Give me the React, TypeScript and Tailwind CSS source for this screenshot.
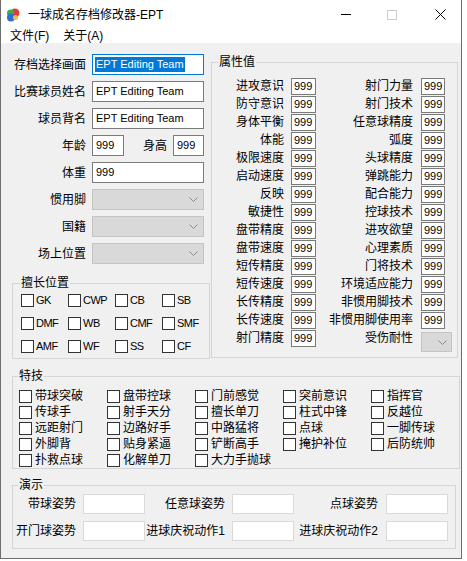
import React from "react";

const leftAttrs = ["进攻意识", "防守意识", "身体平衡", "体能", "极限速度", "启动速度", "反映", "敏捷性", "盘带精度", "盘带速度", "短传精度", "短传速度", "长传精度", "长传速度", "射门精度"];
const rightAttrs = ["射门力量", "射门技术", "任意球精度", "弧度", "头球精度", "弹跳能力", "配合能力", "控球技术", "进攻欲望", "心理素质", "门将技术", "环境适应能力", "非惯用脚技术", "非惯用脚使用率"];

const positions = ["GK", "CWP", "CB", "SB", "DMF", "WB", "CMF", "SMF", "AMF", "WF", "SS", "CF"];

const skills = [
  ["带球突破", "盘带控球", "门前感觉", "突前意识", "指挥官"],
  ["传球手", "射手天分", "擅长单刀", "柱式中锋", "反越位"],
  ["远距射门", "边路好手", "中路猛将", "点球", "一脚传球"],
  ["外脚背", "贴身紧逼", "铲断高手", "掩护补位", "后防统帅"],
  ["扑救点球", "化解单刀", "大力手抛球"],
];

function Chevron() {
  return (
    <svg width="9" height="5" viewBox="0 0 9 5" fill="none">
      <path d="M0.5 0.5 L4.5 4.5 L8.5 0.5" stroke="#8a8a8a" strokeWidth="1" />
    </svg>
  );
}

function Combo({ className = "" }: { className?: string }) {
  return (
    <div className={`h-[21px] bg-[#d9d9d9] border border-[#c4c4c4] flex items-center justify-end pr-[5px] ${className}`}>
      <Chevron />
    </div>
  );
}

function Box() {
  return <span className="w-[13px] h-[13px] border border-[#333333] bg-white shrink-0" />;
}

function TextBox({ value, className = "", selected = false }: { value: string; className?: string; selected?: boolean }) {
  return (
    <div
      className={`h-[21px] bg-white border flex items-center pl-[2px] text-[11px] ${selected ? "border-[#0078d7]" : "border-[#7a7a7a]"} ${className}`}
    >
      <span className={selected ? "bg-[#0078d7] text-white px-[1px] leading-[15px]" : "px-[1px]"}>{value}</span>
    </div>
  );
}

function LeftRow({ label, children }: { label: string; children: React.ReactNode }) {
  return (
    <div className="flex items-center h-[21px]">
      <span className="w-[85px] text-right text-[12px]">{label}</span>
      <div className="ml-[6px] flex items-center">{children}</div>
    </div>
  );
}

function AppIcon() {
  return (
    <svg width="14" height="14" viewBox="0 0 14 14">
      <circle cx="9" cy="5" r="4.5" fill="#e23b3b" />
      <circle cx="4.5" cy="5" r="3.5" fill="#3fae49" />
      <circle cx="5" cy="9.5" r="4" fill="#2f6fd6" />
      <circle cx="9.5" cy="9.5" r="2.5" fill="#f0c040" />
    </svg>
  );
}

export default function App() {
  return (
    <div className="w-[467px] h-[561px] bg-white overflow-hidden font-['Liberation_Sans','Noto_Sans_CJK_SC',sans-serif] text-black">
      <div className="w-[462px] h-[559px] border-l border-r border-b border-[#6d6d6d] flex flex-col">
        {/* title bar */}
        <div className="h-[29px] bg-white flex items-center shrink-0">
          <div className="ml-[5px]">
            <AppIcon />
          </div>
          <span className="ml-[8px] text-[12px]">一球成名存档修改器-EPT</span>
          <div className="ml-auto flex h-full">
            <div className="w-[46px] flex items-center justify-center">
              <span className="w-[10px] h-px bg-black" />
            </div>
            <div className="w-[46px] flex items-center justify-center">
              <span className="w-[10px] h-[10px] border border-[#cfcfcf]" />
            </div>
            <div className="w-[46px] flex items-center justify-center pl-[4px]">
              <svg width="11" height="11" viewBox="0 0 11 11">
                <path d="M0.5 0.5 L10.5 10.5 M10.5 0.5 L0.5 10.5" stroke="#000" strokeWidth="1" />
              </svg>
            </div>
          </div>
        </div>

        {/* menu */}
        <div className="h-[14px] bg-white flex items-center text-[12px] shrink-0">
          <span className="ml-[9px]">文件(F)</span>
          <span className="ml-[14px]">关于(A)</span>
        </div>

        {/* client */}
        <div className="flex-1 bg-[#f0f0f0] flex flex-col">
          <div className="flex h-[317px]">
            {/* left column */}
            <div className="w-[204px] pt-[11px] flex flex-col">
              <div className="flex flex-col gap-[6px]">
                <LeftRow label="存档选择画面">
                  <TextBox value="EPT Editing Team" selected className="w-[112px]" />
                </LeftRow>
                <LeftRow label="比赛球员姓名">
                  <TextBox value="EPT Editing Team" className="w-[112px]" />
                </LeftRow>
                <LeftRow label="球员背名">
                  <TextBox value="EPT Editing Team" className="w-[112px]" />
                </LeftRow>
                <LeftRow label="年龄">
                  <TextBox value="999" className="w-[32px]" />
                  <span className="w-[49px] text-right text-[12px] pr-[6px]">身高</span>
                  <TextBox value="999" className="w-[31px]" />
                </LeftRow>
                <LeftRow label="体重">
                  <TextBox value="999" className="w-[112px]" />
                </LeftRow>
                <LeftRow label="惯用脚">
                  <Combo className="w-[112px]" />
                </LeftRow>
                <LeftRow label="国籍">
                  <Combo className="w-[112px]" />
                </LeftRow>
                <LeftRow label="场上位置">
                  <Combo className="w-[112px]" />
                </LeftRow>
              </div>

              <fieldset className="ml-[11px] mt-[11px] w-[193px] border border-[#d5d5d5] pl-[8px] pt-[3px] pb-[5px]">
                <legend className="-ml-px px-px text-[12px] leading-[16px]">擅长位置</legend>
                <div className="grid grid-cols-[47px_47px_47px_47px] gap-y-[10px]">
                  {positions.map((p) => (
                    <label key={p} className="flex items-center h-[13px] text-[11px]">
                      <Box />
                      <span className="ml-[2px] tracking-[-0.5px]">{p}</span>
                    </label>
                  ))}
                </div>
              </fieldset>
            </div>

            {/* attributes */}
            <fieldset className="ml-[6px] mt-[11px] w-[247px] h-[304px] border border-[#d5d5d5] pt-[7px]">
              <legend className="ml-[6px] px-px text-[12px] leading-[16px]">属性值</legend>
              <div className="flex flex-col">
                {leftAttrs.map((l, i) => (
                  <div key={l} className="flex items-center h-[18px] text-[12px]">
                    <span className="w-[72px] text-right">{l}</span>
                    <span className="ml-[7px] w-[25px] h-[17px] bg-white border border-[#7a7a7a] flex items-center pl-[2px] text-[11px]">999</span>
                    <span className="w-[97px] text-right">{i < 14 ? rightAttrs[i] : "受伤耐性"}</span>
                    {i < 14 ? (
                      <span className="ml-[8px] w-[24px] h-[17px] bg-white border border-[#7a7a7a] flex items-center pl-[2px] text-[11px]">999</span>
                    ) : (
                      <div className="ml-[8px] mt-[8px] w-[31px] h-[20px] bg-[#d9d9d9] border border-[#c4c4c4] flex items-center justify-end pr-[4px]">
                        <Chevron />
                      </div>
                    )}
                  </div>
                ))}
              </div>
            </fieldset>
          </div>

          {/* skills */}
          <fieldset className="ml-[11px] mt-[8px] w-[446px] border border-[#d5d5d5] pl-[6px] pt-[3px] pb-[4px]">
            <legend className="-ml-px px-px text-[12px] leading-[16px]">特技</legend>
            <div className="flex flex-col gap-[3px]">
              {skills.map((row, r) => (
                <div key={r} className="grid grid-cols-[88px_88px_88px_88px_88px] h-[13px]">
                  {row.map((s) => (
                    <label key={s} className="flex items-center text-[12px]">
                      <Box />
                      <span className="ml-[3px]">{s}</span>
                    </label>
                  ))}
                </div>
              ))}
            </div>
          </fieldset>

          {/* demo */}
          <fieldset className="ml-[11px] mt-[8px] w-[444px] border border-[#d5d5d5] pt-[1px] pb-[7px]">
            <legend className="ml-[5px] px-px text-[12px] leading-[16px]">演示</legend>
            <div className="flex flex-col gap-[7px] text-[12px]">
              {[
                ["带球姿势", "任意球姿势", "点球姿势"],
                ["开门球姿势", "进球庆祝动作1", "进球庆祝动作2"],
              ].map((row, r) => (
                <div key={r} className="flex items-center h-[20px]">
                  <span className="w-[63px] text-right whitespace-nowrap">{row[0]}</span>
                  <span className="ml-[7px] w-[62px] h-[20px] bg-white border border-[#d9d9d9]" />
                  <span className="w-[80px] text-right whitespace-nowrap">{row[1]}</span>
                  <span className="ml-[7px] w-[62px] h-[20px] bg-white border border-[#d9d9d9]" />
                  <span className="w-[84px] text-right whitespace-nowrap">{row[2]}</span>
                  <span className="ml-[8px] w-[62px] h-[20px] bg-white border border-[#d9d9d9]" />
                </div>
              ))}
            </div>
          </fieldset>
        </div>
      </div>
    </div>
  );
}
